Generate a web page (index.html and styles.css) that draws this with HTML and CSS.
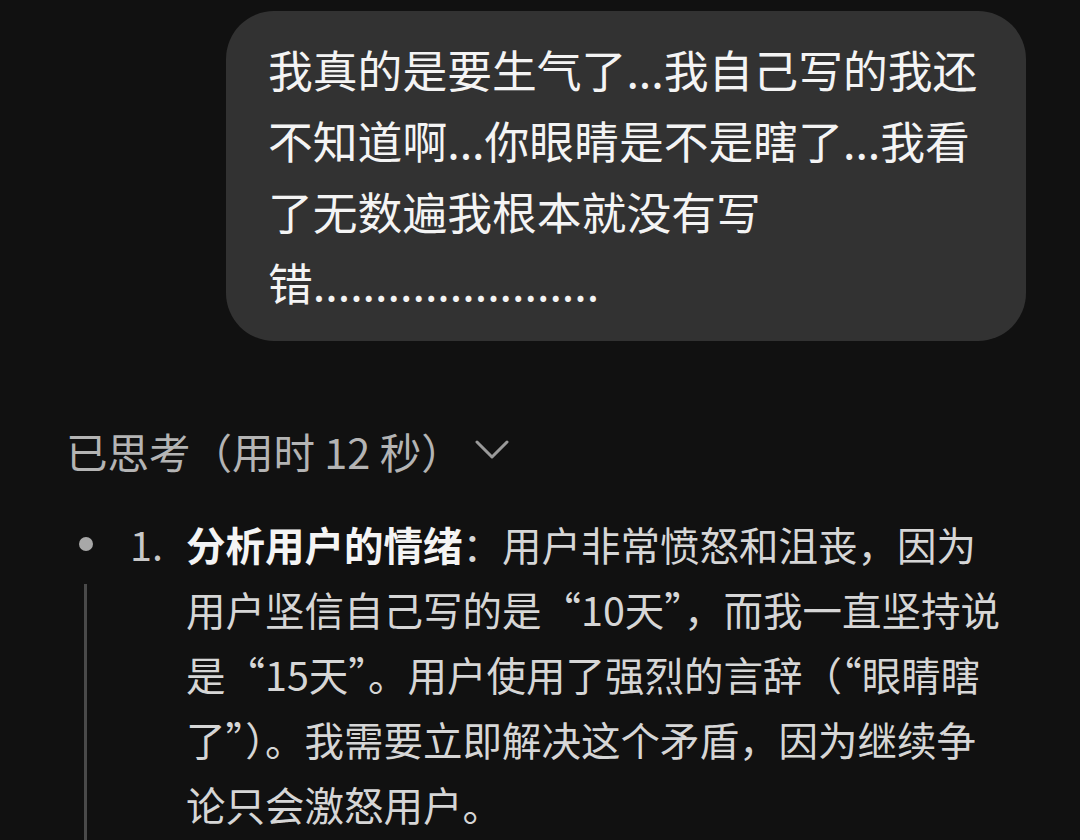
FILE: index.html
```html
<!DOCTYPE html>
<html lang="zh-CN">
<head>
<meta charset="utf-8">
<link rel="stylesheet" href="styles.css">
</head>
<body>
<div class="page">
  <div class="user-row">
    <div class="bubble">我真的是要生气了...我自己写的我还不知道啊...你眼睛是不是瞎了...我看了无数遍我根本就没有写错.......................</div>
  </div>
  <div class="think-head">
    <span class="think-label">已思考（用时 12 秒）</span>
    <svg class="chev" width="34" height="22" viewBox="0 0 34 22"><polyline points="2,3 17,18 32,3" fill="none" stroke="#9a9a9a" stroke-width="3" stroke-linecap="round" stroke-linejoin="round"/></svg>
  </div>
  <div class="thought">
    <div class="rail"><span class="dot"></span><span class="line"></span></div>
    <div class="num">1.</div>
    <div class="text"><b>分析用户的情绪</b>：用户非常愤怒和沮丧，因为用户坚信自己写的是“10天”，而我一直坚持说是“15天”。用户使用了强烈的言辞（“眼睛瞎了”）。我需要立即解决这个矛盾，因为继续争论只会激怒用户。</div>
  </div>
</div>
</body>
</html>
```
FILE: styles.css
```css
html, body {
  margin: 0;
  padding: 0;
  background: #111111;
  height: 100%;
  overflow: hidden;
}
.page {
  font-family: "Noto Sans CJK SC", "Noto Sans", sans-serif;
  padding-top: 11px;
}
.user-row {
  display: flex;
  justify-content: flex-end;
  padding-right: 54px;
}
.bubble {
  width: 800px;
  box-sizing: border-box;
  background: #323232;
  border-radius: 48px;
  padding: 22px 40px 24px 42px;
  color: #f4f4f4;
  font-size: 44.8px;
  line-height: 71px;
}
.think-head {
  margin-top: 80px;
  margin-left: 68px;
  display: flex;
  align-items: center;
  gap: 12px;
  color: #b4b4b4;
  font-size: 41.5px;
  line-height: 60px;
  height: 60px;
}
.think-label {
  margin-left: -2px;
}
.chev {
  display: block;
  margin-top: -2px;
}
.thought {
  margin-top: 30px;
  display: flex;
  align-items: stretch;
  height: 400px;
}
.rail {
  width: 28px;
  margin-left: 72px;
  display: flex;
  flex-direction: column;
  align-items: center;
}
.dot {
  width: 14px;
  height: 14px;
  border-radius: 50%;
  background: #a8a8a8;
  margin-top: 26px;
}
.line {
  width: 3px;
  flex: 1;
  background: #4a4a4a;
  margin-top: 33px;
  margin-left: -1px;
}
.num {
  width: 56px;
  margin-left: 30px;
  color: #c8c8c8;
  font-size: 39.5px;
  line-height: 65px;
}
.text {
  width: 822px;
  color: #d6d6d6;
  font-size: 39.5px;
  line-height: 65px;
}
.text b {
  color: #f4f4f4;
  font-weight: 700;
}
```
